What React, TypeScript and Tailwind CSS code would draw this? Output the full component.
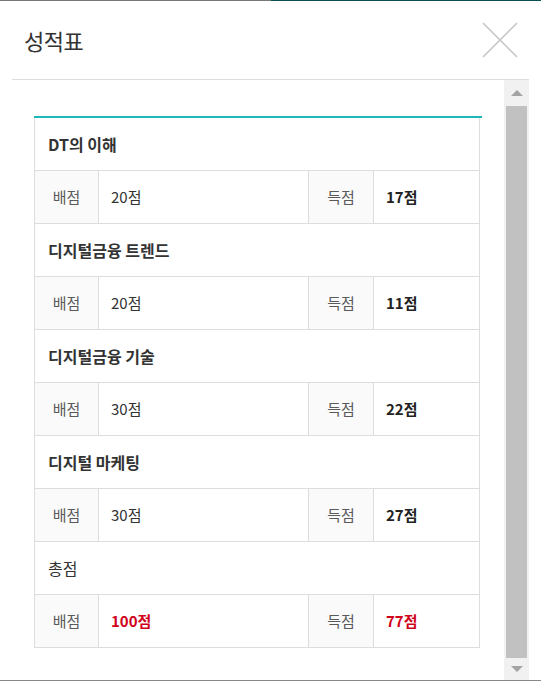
import React from 'react';

type Subject = { name: string; total: string; score: string; highlight?: boolean };

const SUBJECTS: Subject[] = [
    { name: 'DT의 이해', total: '20점', score: '17점' },
    { name: '디지털금융 트렌드', total: '20점', score: '11점' },
    { name: '디지털금융 기술', total: '30점', score: '22점' },
    { name: '디지털 마케팅', total: '30점', score: '27점' },
    { name: '총점', total: '100점', score: '77점', highlight: true },
];

function CloseIcon() {
    return (
        <svg width="36" height="36" viewBox="0 0 36 36" fill="none">
            <path d="M1 1 L35 35 M35 1 L1 35" stroke="#c4c4c4" strokeWidth="1.5" />
        </svg>
    );
}

function ScoreBlock({ subject }: { subject: Subject }) {
    const isTotal = subject.highlight;
    return (
        <div>
            {/* subject title */}
            <div className="h-[53px] flex items-center pl-[13px] border-b border-[#dddddd]">
                <span
                    className={
                        isTotal
                            ? 'text-[16px] text-[#333333]'
                            : 'text-[16px] font-semibold text-[#333333]'
                    }
                >
                    {subject.name}
                </span>
            </div>

            {/* 배점 / 득점 */}
            <div className="h-[53px] flex border-b border-[#dddddd] text-[15px]">
                <div className="w-[64px] flex items-center justify-center bg-[#fafafa] border-r border-[#dddddd] text-[#5a5a5a]">
                    배점
                </div>
                <div
                    className={
                        isTotal
                            ? 'w-[210px] flex items-center pl-[12px] border-r border-[#dddddd] font-bold text-[#d0021b]'
                            : 'w-[210px] flex items-center pl-[12px] border-r border-[#dddddd] text-[#333333]'
                    }
                >
                    {subject.total}
                </div>
                <div className="w-[65px] flex items-center justify-center bg-[#fafafa] border-r border-[#dddddd] text-[#5a5a5a]">
                    득점
                </div>
                <div
                    className={
                        isTotal
                            ? 'flex-1 flex items-center pl-[12px] font-bold text-[#d0021b]'
                            : 'flex-1 flex items-center pl-[12px] font-bold text-[#222222]'
                    }
                >
                    {subject.score}
                </div>
            </div>
        </div>
    );
}

function FakeScrollbar() {
    return (
        <div className="w-[25px] h-full bg-[#f1f1f1] flex flex-col items-center">
            <div className="h-[26px] w-full flex items-center justify-center">
                <div className="w-0 h-0 border-l-[6px] border-r-[6px] border-b-[6px] border-l-transparent border-r-transparent border-b-[#a3a3a3]" />
            </div>
            <div className="w-[21px] h-[552px] bg-[#c1c1c1]" />
            <div className="flex-1 w-full flex items-center justify-center">
                <div className="w-0 h-0 border-l-[6px] border-r-[6px] border-t-[6px] border-l-transparent border-r-transparent border-t-[#a3a3a3]" />
            </div>
        </div>
    );
}

export default function App() {
    return (
        <div
            className="w-[541px] h-[681px] bg-white overflow-hidden flex flex-col"
            style={{ fontFamily: '"Noto Sans CJK KR", "Noto Sans", sans-serif' }}
        >
            {/* top progress line */}
            <div className="h-px flex shrink-0">
                <div className="w-[271px] bg-[#777777]" />
                <div className="flex-1 bg-[#0b4f52]" />
            </div>

            {/* header */}
            <div className="h-[78px] shrink-0 flex items-center justify-between pl-6 pr-[23px]">
                <h1 className="text-[22px] text-[#333333] tracking-[-0.5px]">성적표</h1>
                <CloseIcon />
            </div>

            {/* body */}
            <div className="ml-3 w-[517px] h-[601px] shrink-0 flex border-t border-[#dddddd]">
                <div className="flex-1 pl-[22px] pt-[36px]">
                    <div className="w-[448px] border-t-2 border-[#1fb8b8]">
                        <div className="w-[446px] border-l border-r border-[#dddddd]">
                            {SUBJECTS.map((s) => (
                                <ScoreBlock key={s.name} subject={s} />
                            ))}
                        </div>
                    </div>
                </div>
                <FakeScrollbar />
            </div>

            {/* bottom edge */}
            <div className="h-px shrink-0 bg-[#888888]" />
        </div>
    );
}
